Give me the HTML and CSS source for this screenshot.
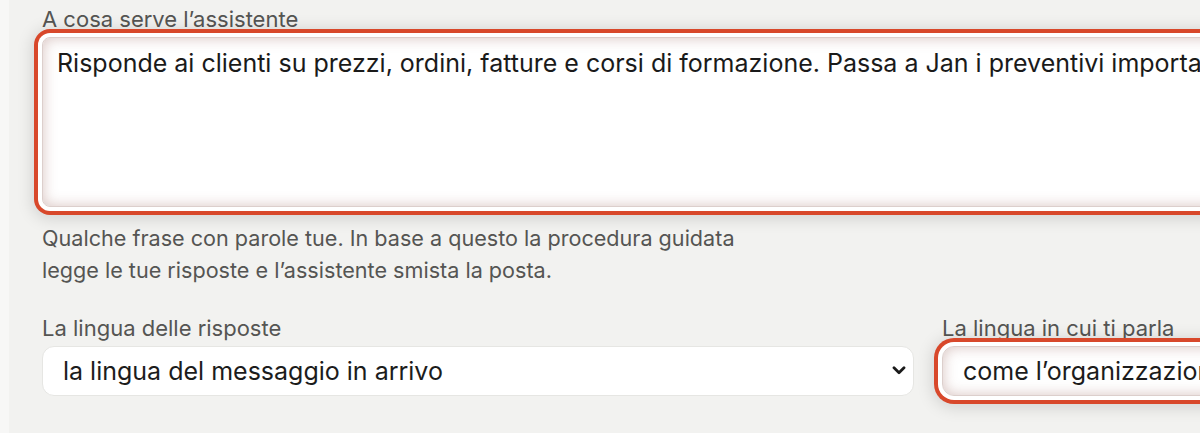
FILE: index.html
```html
<!DOCTYPE html>
<html lang="it">
<head>
  <meta charset="UTF-8">
  <meta name="viewport" content="width=device-width, initial-scale=1">
  <title>Assistente</title>
  <link rel="stylesheet" href="styles.css">
</head>
<body>

  <div class="panel">
    <div class="field">
      <label for="purpose">A cosa serve l’assistente</label>
      <textarea id="purpose" class="spotlight" rows="5">Risponde ai clienti su prezzi, ordini, fatture e corsi di formazione. Passa a Jan i preventivi importanti e i reclami.</textarea>
      <p class="hint">Qualche frase con parole tue. In base a questo la procedura guidata<br>legge le tue risposte e l’assistente smista la posta.</p>
    </div>

    <div class="row">
      <div class="field">
        <label for="reply-lang">La lingua delle risposte</label>
        <div class="select-wrap">
          <select id="reply-lang">
            <option>la lingua del messaggio in arrivo</option>
            <option>italiano</option>
            <option>inglese</option>
          </select>
          <svg class="chevron" width="14" height="9" viewBox="0 0 14 9" aria-hidden="true">
            <path d="M2 1.8 L7 6.8 L12 1.8" fill="none" stroke="#1a1a1a" stroke-width="2.8" stroke-linecap="round" stroke-linejoin="round"/>
          </svg>
        </div>
      </div>

      <div class="field">
        <label for="talk-lang">La lingua in cui ti parla</label>
        <div class="select-wrap">
          <select id="talk-lang" class="spotlight">
            <option>come l’organizzazione</option>
            <option>italiano</option>
            <option>inglese</option>
          </select>
        </div>
      </div>
    </div>
  </div>

</body>
</html>
```

FILE: styles.css
```css
/* Global Styles */
body {
  margin: 0;
  font-family: Inter, "Noto Sans", sans-serif;
  background-color: #f7f7f6;
  color: #1c1c1c;
  overflow: hidden;
}

.panel {
  margin-left: 9px;
  width: 1772px;
  padding: 5px 33px 40px;
  background-color: #f2f2f0;
}

label {
  display: block;
  font-size: 22px;
  line-height: 28px;
  margin-bottom: 4px;
  color: #555553;
}

textarea {
  display: block;
  width: 100%;
  height: 170px;
  padding: 10px 14px;
  border: 1px solid #e4dcda;
  border-radius: 8px;
  background-color: #fff;
  font-family: inherit;
  font-size: 25px;
  line-height: 30px;
  color: #1a1a1a;
  resize: none;
  box-sizing: border-box;
  white-space: nowrap;
  overflow: hidden;
}

.hint {
  margin: 15px 0 0;
  font-size: 21.6px;
  line-height: 32px;
  color: #555553;
}

.row {
  display: grid;
  grid-template-columns: 872px 1fr;
  gap: 28px;
  margin-top: 28px;
}

.select-wrap {
  position: relative;
}

select {
  display: block;
  width: 100%;
  height: 50px;
  padding: 0 40px 0 20px;
  border: 1px solid #e6e6e3;
  border-radius: 12px;
  background-color: #fff;
  font-family: inherit;
  font-size: 25px;
  color: #1c1c1c;
  appearance: none;
  -webkit-appearance: none;
  box-sizing: border-box;
}

.chevron {
  position: absolute;
  right: 8px;
  top: 20px;
}

/* Highlighted field */
.spotlight {
  position: relative;
  border-color: #dccfcc;
  box-shadow:
    inset 0 0 14px rgba(140, 80, 70, 0.34),
    0 0 0 4px #fff,
    0 0 0 8px #d8482b,
    0 2px 16px 10px rgba(0, 0, 0, 0.13);
}
```
